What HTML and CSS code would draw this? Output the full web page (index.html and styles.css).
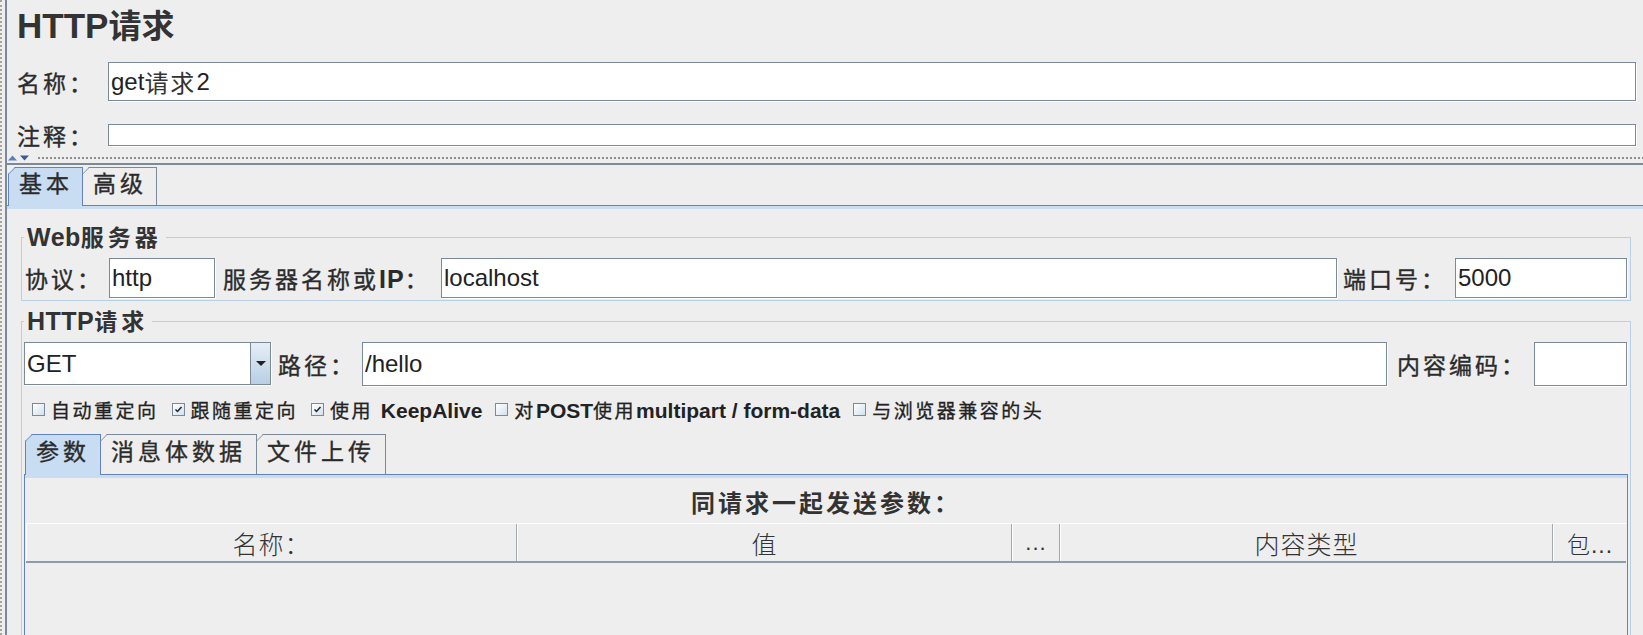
FILE: index.html
```html
<!DOCTYPE html>
<html lang="zh-CN">
<head>
<meta charset="utf-8">
<title>HTTP请求</title>
<link rel="stylesheet" href="styles.css">
</head>
<body>
<div class="app">
  <div class="main">
    <div class="head">
      <h1 class="title"><span class="title-lat">HTTP</span><span class="title-cjk">请求</span></h1>
      <div class="row row-name">
        <span class="lbl lbl-head">名称：</span>
        <div class="field field-name">get<span class="f-cjk">请求</span>2</div>
      </div>
      <div class="row row-comment">
        <span class="lbl lbl-head">注释：</span>
        <div class="field field-comment"></div>
      </div>
    </div>
    <div class="divider">
      <svg class="arrows" width="24" height="6" viewBox="0 0 24 6"><polygon points="0,5.5 9,5.5 4.5,0.5" fill="#5e7fb8"/><polygon points="12,0.5 21,0.5 16.5,5.5" fill="#3d5a94"/></svg>
      <div class="dots"></div>
    </div>
    <div class="tabs">
      <div class="tab tab-sel">基本</div>
      <div class="tab">高级</div>
    </div>
    <div class="tabpane">
      <fieldset class="group group-web">
        <legend class="legend"><span class="lg-lat">Web</span>服务器</legend>
        <div class="frow frow-web">
          <span class="lbl lbl-proto">协议：</span>
          <div class="field f-proto">http</div>
          <span class="lbl lbl-server">服务器名称或<span class="lb-lat">IP</span>：</span>
          <div class="field f-server">localhost</div>
          <span class="lbl lbl-port">端口号：</span>
          <div class="field f-port">5000</div>
        </div>
      </fieldset>
      <fieldset class="group group-http">
        <legend class="legend"><span class="lg-lat">HTTP</span>请求</legend>
        <div class="frow frow-http">
          <div class="combo">
            <div class="combo-text">GET</div>
            <div class="combo-btn"><svg width="10" height="5" viewBox="0 0 10 5"><polygon points="0,0 10,0 5,5" fill="#222"/></svg></div>
          </div>
          <span class="lbl lbl-path">路径：</span>
          <div class="field f-path">/hello</div>
          <span class="lbl lbl-enc">内容编码：</span>
          <div class="field f-enc"></div>
        </div>
        <div class="checks">
          <span class="chk"><span class="box"></span><span class="chk-text">自动重定向</span></span>
          <span class="chk"><span class="box"><svg width="9" height="8" viewBox="0 0 9 8"><path d="M1.5 4.5 L3.5 6.5 L7.5 2" fill="none" stroke="#222" stroke-width="1.5"/></svg></span><span class="chk-text">跟随重定向</span></span>
          <span class="chk"><span class="box"><svg width="9" height="8" viewBox="0 0 9 8"><path d="M1.5 4.5 L3.5 6.5 L7.5 2" fill="none" stroke="#222" stroke-width="1.5"/></svg></span><span class="chk-text">使用 <span class="cb-lat">KeepAlive</span></span></span>
          <span class="chk"><span class="box"></span><span class="chk-text">对<span class="cb-lat">POST</span>使用<span class="cb-lat">multipart / form-data</span></span></span>
          <span class="chk"><span class="box"></span><span class="chk-text">与浏览器兼容的头</span></span>
        </div>
        <div class="subtabs">
          <div class="tab subtab tab-sel">参数</div>
          <div class="tab subtab">消息体数据</div>
          <div class="tab subtab">文件上传</div>
        </div>
        <div class="panel">
          <div class="caption">同请求一起发送参数：</div>
          <div class="thead">
            <div class="th">名称：</div>
            <div class="th">值</div>
            <div class="th th-dots">...</div>
            <div class="th">内容类型</div>
            <div class="th">包...</div>
          </div>
        </div>
      </fieldset>
    </div>
  </div>
</div>
</body>
</html>
```
FILE: styles.css
```css
* { box-sizing: border-box; }
html, body { margin: 0; padding: 0; }
body {
  width: 1643px;
  height: 635px;
  overflow: hidden;
  background: #eeeeee;
  color: #333;
  font-family: "Liberation Sans", "Noto Sans CJK SC", sans-serif;
}
.app {
  height: 635px;
  overflow: hidden;
  border-left: 2px dotted #a5a5a5;
  padding-left: 3px;
}
.main {
  height: 100%;
  border-left: 2px solid #7a8a99;
  display: flex;
  flex-direction: column;
}
.head { padding: 0 7px 0 10px; flex: none; }
.title {
  margin: 6px 0 0;
  height: 40px;
  line-height: 40px;
  white-space: nowrap;
  color: #333;
}
.title-lat { font-size: 35px; font-weight: bold; }
.title-cjk { font-size: 33px; font-weight: bold; }

.row { display: flex; align-items: center; }
.row-name { margin-top: 16px; height: 39px; }
.row-comment { margin-top: 23px; height: 22px; }

.lbl {
  flex: none;
  white-space: nowrap;
  font-size: 23px;
  letter-spacing: 3px;
  color: #2b2b2b;
  -webkit-text-stroke: 0.35px #2b2b2b;
}
.lbl-head { width: 91px; }
.lb-lat { font-weight: bold; letter-spacing: 1px; font-size: 25px; -webkit-text-stroke: 0; }

.field {
  background: #fff;
  border: 1px solid #7a8a99;
  box-shadow: 1px 1px 0 #fff;
  display: flex;
  align-items: center;
  padding-left: 2px;
  font-size: 24px;
  color: #222;
  white-space: nowrap;
  overflow: hidden;
}
.f-cjk { letter-spacing: 2px; color: #333; }
.field-name { flex: 1; height: 39px; }
.field-comment { flex: 1; height: 22px; }

.divider {
  flex: none;
  margin-top: 4px;
  height: 15px;
  padding-top: 2px;
  border-bottom: 2px solid #7a8a99;
  display: flex;
  align-items: center;
}
.arrows { margin-left: 1px; flex: none; }
.dots {
  flex: 1;
  height: 4px;
  margin-left: 5px;
  background-image: radial-gradient(circle, #8d8d8d 0.9px, transparent 1.3px);
  background-size: 4px 4px;
}

.tabs {
  flex: none;
  display: flex;
  align-items: flex-start;
  margin-top: 2px;
  padding-left: 1px;
  height: 38px;
}
.tab {
  position: relative;
  height: 38px;
  padding: 0 9px 0 10px;
  border: 1px solid #7a8a99;
  border-bottom: none;
  font-size: 23px;
  letter-spacing: 4px;
  line-height: 32px;
  color: #2b2b2b;
  -webkit-text-stroke: 0.35px #2b2b2b;
  white-space: nowrap;
  clip-path: polygon(7px 0, 100% 0, 100% 100%, 0 100%, 0 7px);
}
.tab + .tab { margin-left: -1px; }
.tab::before {
  content: "";
  position: absolute;
  left: -2px;
  top: 2.4px;
  width: 9.9px;
  height: 1px;
  background: #7a8a99;
  transform: rotate(-45deg);
}
.tab-sel {
  background: #c8ddf2;
  border-color: #6382bf;
  z-index: 1;
  height: 39px;
  margin-bottom: -1px;
}
.tab-sel::before { background: #6382bf; }

.tabpane {
  flex: 1;
  min-height: 0;
  border-top: 1px solid #6382bf;
  box-shadow: inset 0 3px 0 #c8ddf2;
  padding: 17px 12px 0 14px;
}

.group {
  margin: 0;
  min-width: 0;
  border: 1px solid #b8cfe5;
  padding: 6px 3px 2px 2px;
}
.group-http { margin-top: 6px; padding-bottom: 0; }
.legend {
  padding: 0 4px 0 3px;
  font-size: 23px;
  letter-spacing: 4px;
  line-height: 28px;
  font-weight: bold;
  color: #333;
  white-space: nowrap;
}
.lg-lat { font-size: 25px; letter-spacing: 0.5px; }

.frow { display: flex; align-items: center; }
.frow-web { height: 40px; }
.frow-web .field { height: 40px; }
.lbl-proto { width: 85px; padding-left: 1px; }
.f-proto { width: 106px; flex: none; }
.lbl-server { margin-left: 8px; width: 218px; }
.f-server { flex: 1; }
.lbl-port { margin-left: 6px; width: 112px; }
.f-port { width: 172px; flex: none; }

.frow-http { height: 43px; }
.combo {
  flex: none;
  width: 247px;
  height: 43px;
  display: flex;
  border: 1px solid #7a8a99;
  background: #fff;
  box-shadow: 1px 1px 0 #fff;
}
.combo-text {
  flex: 1;
  display: flex;
  align-items: center;
  padding-left: 2px;
  font-size: 24px;
  color: #222;
}
.combo-btn {
  width: 20px;
  border-left: 1px solid #7a8a99;
  background: linear-gradient(#e6eef7, #b8cfe5);
  display: flex;
  align-items: center;
  justify-content: center;
}
.lbl-path { margin-left: 7px; width: 84px; }
.f-path { flex: 1; height: 44px; }
.lbl-enc { margin-left: 10px; width: 137px; }
.f-enc { width: 93px; flex: none; height: 44px; }

.checks {
  display: flex;
  align-items: center;
  height: 24px;
  margin-top: 12px;
  padding-left: 8px;
  font-size: 19px;
  letter-spacing: 2.5px;
  color: #222;
}
.chk {
  display: flex;
  align-items: center;
  margin-right: 13px;
  white-space: nowrap;
}
.chk-text { -webkit-text-stroke: 0.3px #222; }
.box {
  flex: none;
  width: 13px;
  height: 13px;
  margin-right: 6px;
  border: 1px solid #7a8a99;
  background: linear-gradient(135deg, #ffffff, #d3e1ee);
  display: flex;
  align-items: center;
  justify-content: center;
}
.cb-lat { font-weight: bold; font-size: 21px; letter-spacing: 0; -webkit-text-stroke: 0; }

.subtabs {
  display: flex;
  align-items: flex-start;
  margin-top: 13px;
  padding-left: 1px;
  height: 40px;
}
.subtab { height: 40px; line-height: 34px; padding: 0 10px; }
.subtab.tab-sel { height: 41px; }

.panel {
  margin-right: -1px;
  height: 300px;
  border: 1px solid #6382bf;
  border-bottom: none;
  box-shadow: inset 0 3px 0 #c8ddf2;
  padding: 4px 1px 0;
}
.caption {
  height: 44px;
  display: flex;
  align-items: center;
  justify-content: center;
  font-size: 24px;
  font-weight: bold;
  letter-spacing: 3px;
  color: #333;
}
.thead {
  display: grid;
  grid-template-columns: 491px 495px 48px 493px 1fr;
  height: 40px;
  border-top: 1px solid #fff;
  border-bottom: 2px solid #8e9baa;
}
.th {
  display: flex;
  align-items: center;
  justify-content: center;
  padding-left: 1px;
  font-size: 25px;
  font-weight: 300;
  letter-spacing: 1px;
  color: #333;
  border-right: 1px solid #a3a9b0;
  box-shadow: inset 1px 0 0 #fff;
  white-space: nowrap;
  overflow: hidden;
}
.th-dots { font-size: 22px; }
.th:last-child { border-right: none; font-size: 23px; }
```
